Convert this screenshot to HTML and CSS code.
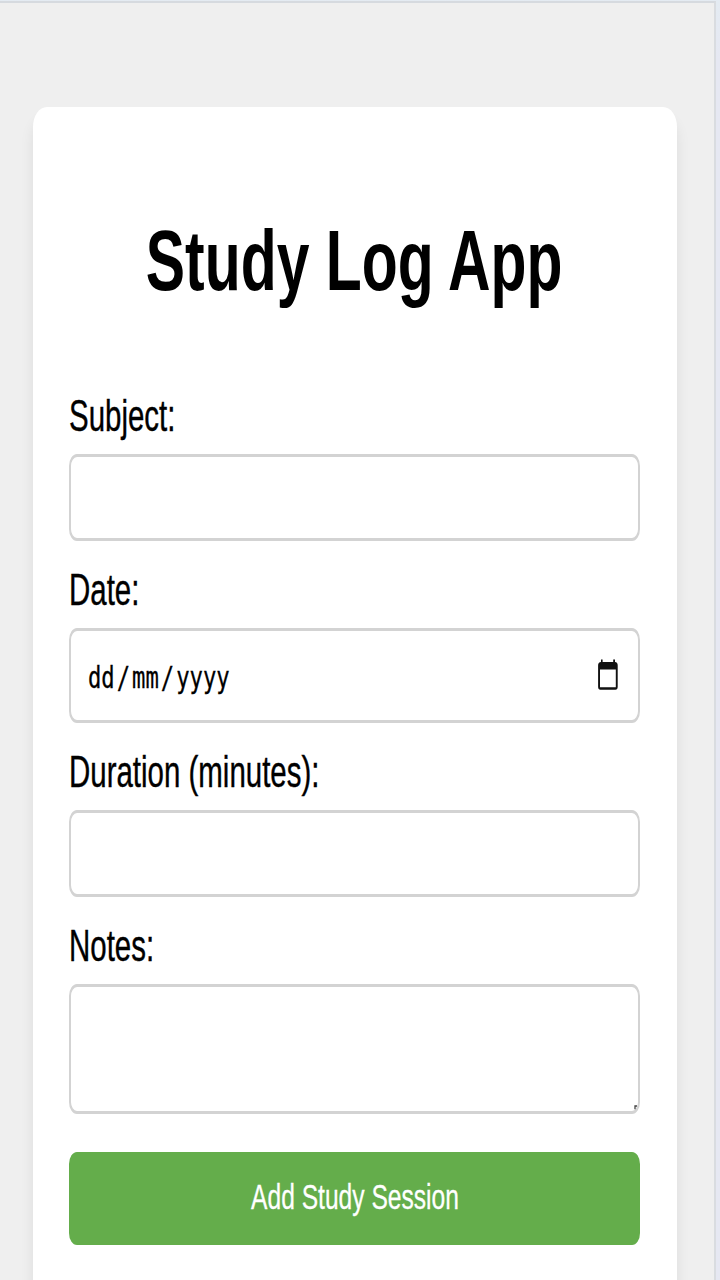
FILE: index.html
```html
<!DOCTYPE html>
<html lang="en">
<head>
<meta charset="utf-8">
<title>Study Log App</title>
<link rel="stylesheet" href="styles.css">
</head>
<body>
<div class="page">
  <main class="card">
    <h1 class="title"><span class="title-text">Study Log App</span></h1>
    <form class="form">
      <div class="field">
        <label class="label" for="subject"><span class="narrow">Subject:</span></label>
        <input class="control" id="subject" type="text">
      </div>
      <div class="field">
        <label class="label"><span class="narrow">Date:</span></label>
        <div class="control control-date">
          <div class="date-text"><span>dd</span><span>/</span><span>mm</span><span>/</span><span>yyyy</span></div>
          <svg class="calendar" viewBox="0 0 20 32" preserveAspectRatio="none">
            <path fill="#111" fill-rule="evenodd" d="M3 0.5h1.6v2.5h10.6v-2.5h1.8v2.5q2.7 0.4 2.7 3.2v21.6q0 3-2.3 3h-15q-2.3 0-2.3-3v-21.6q0-2.8 2.9-3.2zM2 10.6v17.6h15.8v-17.6z"/>
          </svg>
        </div>
      </div>
      <div class="field">
        <label class="label" for="duration"><span class="narrow">Duration (minutes):</span></label>
        <input class="control" id="duration" type="text">
      </div>
      <div class="field">
        <label class="label" for="notes"><span class="narrow">Notes:</span></label>
        <div class="notes-wrap">
          <textarea class="control control-notes" id="notes"></textarea>
          <svg class="grip" viewBox="0 0 4 5"><path d="M1 4.2V1H3" fill="none" stroke="#444" stroke-width="1.3"/></svg>
        </div>
      </div>
      <button class="submit" type="button"><span class="submit-text">Add Study Session</span></button>
    </form>
  </main>
</div>
</body>
</html>
```
FILE: styles.css
```css
* { box-sizing: border-box; }

body {
  margin: 0;
  height: 1280px;
  overflow: hidden;
  padding: 1px 4px 0 0;
  background: linear-gradient(#e4ebf2, #e6e8f2 60px);
  font-family: "Liberation Sans", Arial, sans-serif;
  color: #000;
}

.page {
  height: 1279px;
  overflow: hidden;
  padding: 104px 37px 0 32.5px;
  background: #efefef;
  border-top: 2px solid #d6dadf;
  border-right: 2px solid #d9dce0;
}

.card {
  height: 1300px;
  padding: 99px 37px 0 36.5px;
  background: #fff;
  border-radius: 14px / 20px;
  box-shadow: 0 13px 14px rgba(0, 0, 0, 0.08);
}

.title {
  display: flex;
  justify-content: center;
  margin: 0 0 77px;
  height: 108px;
  line-height: 108px;
  font-size: 86px;
  font-weight: bold;
  white-space: nowrap;
}

.title-text {
  flex: none;
  transform: scaleX(0.685);
}

.form {
  display: flex;
  flex-direction: column;
}

.field { margin-bottom: 23px; }

.label {
  display: block;
  height: 50px;
  margin-bottom: 13px;
  line-height: 50px;
  font-size: 43.5px;
  white-space: nowrap;
}

.field + .field .label {
  padding-top: 0;
  margin-top: 24px;
}

.field { margin-bottom: 0; }

.narrow {
  display: inline-block;
  transform: scaleX(0.677);
  transform-origin: 0 50%;
  -webkit-text-stroke: 0.4px #000;
}

.control {
  display: block;
  width: 100%;
  height: 87px;
  margin: 0;
  padding: 0 18px;
  border: solid #d3d3d3;
  border-width: 3px 2px;
  border-radius: 8px / 12px;
  background: #fff;
  outline: none;
}

.control-date {
  display: flex;
  align-items: center;
  justify-content: space-between;
  height: 95px;
  padding: 0 20px 0 16.5px;
}

.date-text {
  display: flex;
  gap: 2.7px;
  padding-top: 4px;
  font: 30px "DejaVu Sans Mono", monospace;
  transform: scaleX(0.74);
  transform-origin: 0 50%;
  -webkit-text-stroke: 0.3px #000;
}

.calendar {
  width: 20px;
  height: 32px;
  margin-bottom: 2px;
}

.notes-wrap { position: relative; }

.control-notes {
  height: 130px;
  resize: none;
}

.grip {
  position: absolute;
  right: 2px;
  bottom: 4px;
  width: 4px;
  height: 5px;
}

.submit {
  display: flex;
  align-items: center;
  justify-content: center;
  height: 93px;
  margin-top: 38px;
  padding: 0 0 2px;
  border: 0;
  border-radius: 8px / 12px;
  background: #64ad4b;
  color: #fff;
  font: 35.5px "Liberation Sans", Arial, sans-serif;
  white-space: nowrap;
}

.submit-text {
  flex: none;
  transform: scaleX(0.693);
  -webkit-text-stroke: 0.3px #fff;
}
```
